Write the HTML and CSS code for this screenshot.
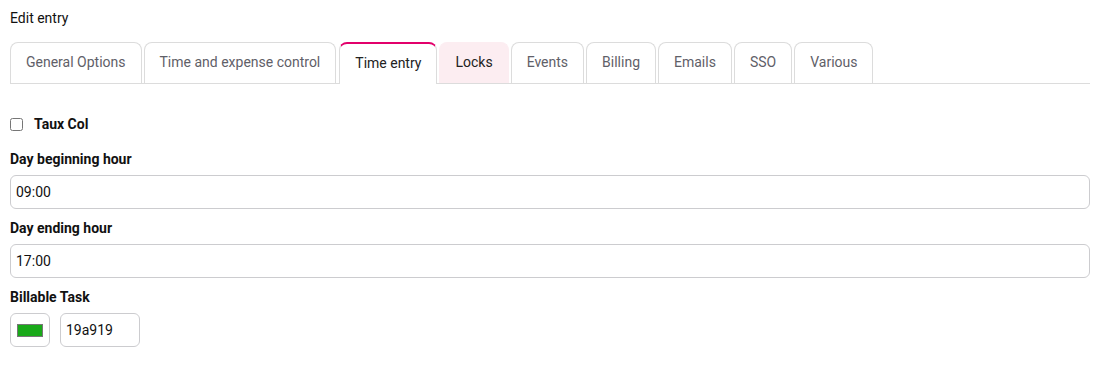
FILE: index.html
```html
<!DOCTYPE html>
<html lang="en">
<head>
    <meta charset="UTF-8">
    <title>Edit entry</title>
    <link rel="stylesheet" href="styles.css">
</head>
<body>
    <div class="page-title">Edit entry</div>

    <!-- tabs -->
    <div class="tabs">
        <div class="tab">General Options</div>
        <div class="tab">Time and expense control</div>
        <div class="tab active">Time entry</div>
        <div class="tab hover">Locks</div>
        <div class="tab">Events</div>
        <div class="tab">Billing</div>
        <div class="tab">Emails</div>
        <div class="tab">SSO</div>
        <div class="tab">Various</div>
    </div>

    <!-- time entry form -->
    <div class="form">
        <label class="check-row">
            <input type="checkbox" class="check">
            <span>Taux Col</span>
        </label>

        <div class="field-label">Day beginning hour</div>
        <input type="text" class="text-input" value="09:00">

        <div class="field-label">Day ending hour</div>
        <input type="text" class="text-input" value="17:00">

        <div class="field-label">Billable Task</div>
        <div class="color-row">
            <div class="color-box"><span class="swatch"></span></div>
            <input type="text" class="text-input small" value="19a919">
        </div>
    </div>
</body>
</html>
```

FILE: styles.css
```css
body {
    margin: 0;
    padding: 10px;
    font-family: Roboto, "Liberation Sans", Arial, sans-serif;
    color: #111;
    background: #fff;
}
.page-title {
    font-size: 14px;
    line-height: 17px;
    margin-bottom: 15px;
}
.tabs {
    display: flex;
    gap: 2px;
    border-bottom: 1px solid #dcdcdc;
}
.tab {
    height: 40px;
    line-height: 39px;
    padding: 0 15px;
    border: 1px solid #dcdcdc;
    border-bottom: none;
    border-radius: 8px 8px 0 0;
    font-size: 14px;
    color: #5f6068;
}
.tab.active {
    border-top: 2px solid #e2006b;
    color: #222;
    background: #fff;
    margin: 0 0 -1px 1px;
}
.tab.hover {
    background: #fcedf1;
    border-color: #fcedf1;
    color: #222;
}
.form {
    padding-top: 30px;
}
.check-row {
    display: flex;
    align-items: center;
    gap: 11px;
    font-size: 14px;
    font-weight: bold;
    height: 20px;
    margin-bottom: 16px;
}
.check {
    width: 13px;
    height: 13px;
    margin: 0;
}
.field-label {
    font-size: 14px;
    font-weight: bold;
    line-height: 18px;
    margin-bottom: 7px;
}
.text-input {
    display: block;
    box-sizing: border-box;
    width: 100%;
    height: 34px;
    border: 1px solid #cccccf;
    border-radius: 6px;
    padding: 0 5px;
    font-family: Roboto, "Liberation Sans", Arial, sans-serif;
    font-size: 14px;
    color: #111;
    margin: 0 0 10px 0;
}
.color-row {
    display: flex;
    gap: 10px;
}
.color-box {
    box-sizing: border-box;
    width: 40px;
    height: 34px;
    border: 1px solid #cccccf;
    border-radius: 6px;
    display: flex;
    align-items: center;
    justify-content: center;
}
.swatch {
    width: 24px;
    height: 11px;
    background: #19a919;
    border: 1px solid #777;
}
.text-input.small {
    width: 80px;
}
```
